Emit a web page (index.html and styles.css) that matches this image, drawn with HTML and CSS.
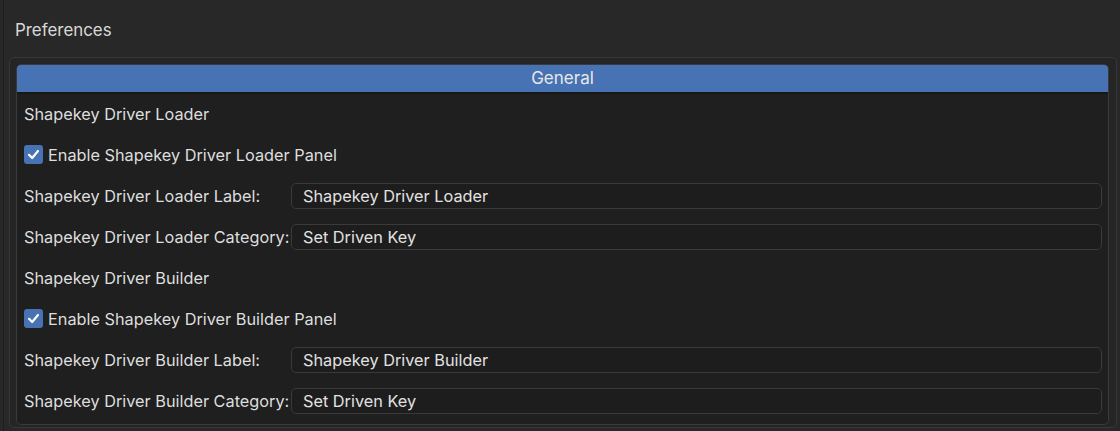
FILE: index.html
```html
<!DOCTYPE html>
<html>
<head>
<meta charset="utf-8">
<link rel="stylesheet" href="styles.css">
</head>
<body>
<div class="app">
  <div class="title">Preferences</div>
  <div class="outer">
    <div class="inner">
      <div class="header">General</div>
      <div class="rows">
        <div class="row"><span class="text">Shapekey Driver Loader</span></div>
        <div class="row">
          <span class="check"><svg viewBox="0 0 19 19" width="19" height="19"><path d="M5 9.8 L8.2 13 L14 6" fill="none" stroke="#ffffff" stroke-width="2.2" stroke-linecap="round" stroke-linejoin="round"/></svg></span>
          <span class="text">Enable Shapekey Driver Loader Panel</span>
        </div>
        <div class="row field">
          <span class="label">Shapekey Driver Loader Label:</span>
          <span class="input">Shapekey Driver Loader</span>
        </div>
        <div class="row field">
          <span class="label">Shapekey Driver Loader Category:</span>
          <span class="input">Set Driven Key</span>
        </div>
        <div class="row"><span class="text">Shapekey Driver Builder</span></div>
        <div class="row">
          <span class="check"><svg viewBox="0 0 19 19" width="19" height="19"><path d="M5 9.8 L8.2 13 L14 6" fill="none" stroke="#ffffff" stroke-width="2.2" stroke-linecap="round" stroke-linejoin="round"/></svg></span>
          <span class="text">Enable Shapekey Driver Builder Panel</span>
        </div>
        <div class="row field">
          <span class="label">Shapekey Driver Builder Label:</span>
          <span class="input">Shapekey Driver Builder</span>
        </div>
        <div class="row field">
          <span class="label">Shapekey Driver Builder Category:</span>
          <span class="input">Set Driven Key</span>
        </div>
      </div>
    </div>
  </div>
</div>
</body>
</html>
```

FILE: styles.css
```css
html, body {
  margin: 0;
  padding: 0;
  background: #282828;
  width: 1120px;
  height: 431px;
  overflow: hidden;
  font-family: Inter, "Noto Sans", sans-serif;
  font-size: 16.3px;
  color: #dcdcdc;
}

.app {
  height: 431px;
  box-sizing: border-box;
  border-left: 1px solid #1e1e1e;
  margin-left: 3px;
  padding-left: 5px;
  padding-right: 3px;
}

.title {
  height: 57px;
  box-sizing: border-box;
  padding-top: 20px;
  padding-left: 6px;
  line-height: 20px;
  font-size: 16.9px;
  color: #d8d8d8;
}

.outer {
  height: 371px;
  box-sizing: border-box;
  border: 1px solid #383838;
  border-radius: 5px;
  background: #252525;
  padding: 6px 7px 3px 6px;
}

.inner {
  height: 361px;
  box-sizing: border-box;
  border: 1px solid #3a3a3a;
  border-radius: 5px;
  background: #1f1f1f;
  overflow: hidden;
}

.header {
  height: 27px;
  background: #4772b3;
  border-bottom: 2px solid #171717;
  color: #e8e8e8;
  text-align: center;
  line-height: 27px;
  font-size: 17px;
}

.rows {
  display: flex;
  flex-direction: column;
  padding: 0 6px 0 7px;
}

.row {
  height: 41px;
  box-sizing: border-box;
  padding-bottom: 2px;
  display: flex;
  align-items: center;
}

.text {
  color: #dedede;
}

.check {
  width: 19px;
  height: 19px;
  border-radius: 3px;
  background: #4772b3;
  margin-right: 5px;
  display: flex;
}

.label {
  width: 267px;
  flex: none;
  color: #dedede;
  white-space: nowrap;
}

.input {
  flex: 1;
  height: 26px;
  box-sizing: border-box;
  border: 1px solid #3a3a3a;
  border-radius: 5px;
  background: #1d1d1d;
  padding-left: 11px;
  line-height: 24px;
  color: #e2e2e2;
}
```
